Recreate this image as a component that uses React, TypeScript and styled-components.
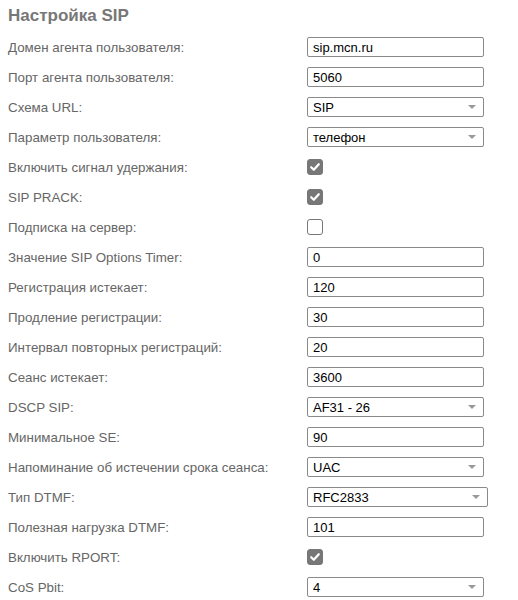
import { Fragment } from "react";
import styled, { createGlobalStyle } from "styled-components";

const GlobalStyle = createGlobalStyle`
  body {
    margin: 0;
    background: #fff;
    font-family: "Liberation Sans", Arial, sans-serif;
  }
`;

const Page = styled.div`
  padding: 0 8px;
  width: 502px;
`;

const Title = styled.h2`
  margin: 0;
  height: 32px;
  line-height: 32px;
  font-size: 17px;
  font-weight: bold;
  color: #777;
`;

const Form = styled.div`
  display: grid;
  grid-template-columns: 299px 1fr;
  grid-auto-rows: 30px;
  align-items: center;
`;

const Label = styled.div`
  font-size: 13.33px;
  color: #666;
`;

const Field = styled.div<{ $wide?: boolean }>`
  box-sizing: border-box;
  width: ${(p) => (p.$wide ? "181px" : "177px")};
  height: 20px;
  border: 1px solid #8a8a8a;
  border-radius: 2px;
  padding: 0 5px;
  display: flex;
  align-items: center;
  justify-content: space-between;
  font-size: 13px;
  color: #000;
  background: #fff;
`;

const Arrow = styled.span`
  width: 0;
  height: 0;
  margin-right: 2px;
  border-left: 4px solid transparent;
  border-right: 4px solid transparent;
  border-top: 4px solid #999;
`;

const Box = styled.div<{ $on: boolean }>`
  box-sizing: border-box;
  width: 16px;
  height: 16px;
  border-radius: 3px;
  border: 1px solid #777;
  background: ${(p) => (p.$on ? "#777" : "#fff")};
  display: flex;
  align-items: center;
  justify-content: center;
`;

type Row =
  | { label: string; kind: "text"; value: string }
  | { label: string; kind: "select"; value: string; wide?: boolean }
  | { label: string; kind: "check"; on: boolean };

const rows: Row[] = [
  { label: "Домен агента пользователя:", kind: "text", value: "sip.mcn.ru" },
  { label: "Порт агента пользователя:", kind: "text", value: "5060" },
  { label: "Схема URL:", kind: "select", value: "SIP" },
  { label: "Параметр пользователя:", kind: "select", value: "телефон" },
  { label: "Включить сигнал удержания:", kind: "check", on: true },
  { label: "SIP PRACK:", kind: "check", on: true },
  { label: "Подписка на сервер:", kind: "check", on: false },
  { label: "Значение SIP Options Timer:", kind: "text", value: "0" },
  { label: "Регистрация истекает:", kind: "text", value: "120" },
  { label: "Продление регистрации:", kind: "text", value: "30" },
  { label: "Интервал повторных регистраций:", kind: "text", value: "20" },
  { label: "Сеанс истекает:", kind: "text", value: "3600" },
  { label: "DSCP SIP:", kind: "select", value: "AF31 - 26" },
  { label: "Минимальное SE:", kind: "text", value: "90" },
  { label: "Напоминание об истечении срока сеанса:", kind: "select", value: "UAC" },
  { label: "Тип DTMF:", kind: "select", value: "RFC2833", wide: true },
  { label: "Полезная нагрузка DTMF:", kind: "text", value: "101" },
  { label: "Включить RPORT:", kind: "check", on: true },
  { label: "CoS Pbit:", kind: "select", value: "4" },
];

function Control({ row }: { row: Row }) {
  if (row.kind === "check") {
    return (
      <Box $on={row.on}>
        {row.on && (
          <svg width="12" height="12" viewBox="0 0 12 12">
            <path d="M2.2 6.2 L4.8 8.8 L9.8 3.2" fill="none" stroke="#fff" strokeWidth="2.2" strokeLinecap="round" strokeLinejoin="round" />
          </svg>
        )}
      </Box>
    );
  }
  if (row.kind === "select") {
    return (
      <Field $wide={row.wide}>
        <span>{row.value}</span>
        <Arrow />
      </Field>
    );
  }
  return (
    <Field>
      <span>{row.value}</span>
    </Field>
  );
}

export default function App() {
  return (
    <Page>
      <GlobalStyle />
      <Title>Настройка SIP</Title>
      <Form>
        {rows.map((row) => (
          <Fragment key={row.label}>
            <Label>{row.label}</Label>
            <div>
              <Control row={row} />
            </div>
          </Fragment>
        ))}
      </Form>
    </Page>
  );
}
